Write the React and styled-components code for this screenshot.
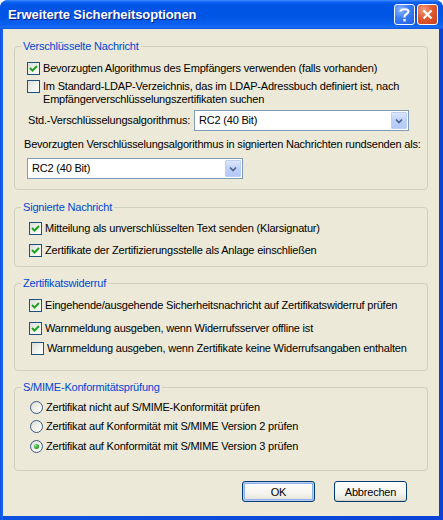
import React from 'react';
import styled, { createGlobalStyle } from 'styled-components';

const GlobalStyle = createGlobalStyle`
  html, body {
    margin: 0;
    padding: 0;
    background: #ffffff;
  }
  body {
    font-family: "Liberation Sans", Arial, sans-serif;
    font-size: 11px;
    letter-spacing: -0.2px;
    color: #000;
  }
`;

const Window = styled.div`
  width: 443px;
  height: 520px;
  display: flex;
  flex-direction: column;
  background: linear-gradient(90deg, #0a4fe0 0, #1c68f5 2px, #0c50e0 3px, #0842d8 100%);
  border-radius: 8px 8px 0 0;
  overflow: hidden;
`;

const TitleBar = styled.div`
  height: 29px;
  flex: none;
  display: flex;
  align-items: center;
  padding: 0 5px 0 8px;
  background: linear-gradient(180deg, #3d8cff 0%, #0a5ff0 8%, #0055e6 20%, #0054e3 55%, #0a60ee 85%, #1a6cf4 93%, #0a55e0 100%);
`;

const Title = styled.div`
  flex: 1;
  color: #fff;
  font-family: "Liberation Sans", Arial, sans-serif;
  font-weight: bold;
  font-size: 13px;
  letter-spacing: -0.1px;
  text-shadow: 1px 1px 0 #0a1e8a;
`;

const CaptionButton = styled.div`
  width: 21px;
  height: 21px;
  box-sizing: border-box;
  margin-left: 2px;
  border: 1px solid #fff;
  border-radius: 3px;
  display: flex;
  align-items: center;
  justify-content: center;
  background: ${p => p.$close
    ? 'radial-gradient(circle at 30% 25%, #f0a080 0%, #e05a30 45%, #c8401a 100%)'
    : 'radial-gradient(circle at 30% 25%, #8cb6ff 0%, #3a7cf5 45%, #1f5ee0 100%)'};
`;

const Body = styled.div`
  flex: 1;
  margin: 0 4px 4px 3px;
  background: #ece9d8;
  padding: 11px 11px 0 11px;
  display: flex;
  flex-direction: column;
`;

const Group = styled.fieldset`
  margin: ${p => p.$mt || 0}px 0 0 0;
  padding: 0 0 ${p => p.$pb}px ${p => p.$pl}px;
  border: 1px solid #d0d0bf;
  border-radius: 4px;
  min-width: 0;
`;

const Legend = styled.legend`
  color: #0046d5;
  padding: 0 2px;
  margin-left: ${p => p.$ml}px;
  line-height: 13px;
`;

const Row = styled.div`
  display: flex;
  align-items: flex-start;
  margin-top: ${p => p.$mt || 0}px;
  margin-left: ${p => p.$ml || 0}px;
  line-height: 13px;
`;

const FieldRow = styled.div`
  display: flex;
  align-items: center;
  margin-top: ${p => p.$mt || 0}px;
  line-height: 13px;
`;

const Label = styled.div`
  margin-left: ${p => p.$ml || 0}px;
  width: ${p => p.$w ? `${p.$w}px` : 'auto'};
  flex: none;
  white-space: nowrap;
`;

const Text = styled.div`
  margin-left: ${p => p.$gap ?? 3}px;
`;

const Box = styled.div`
  width: 13px;
  height: 13px;
  flex: none;
  box-sizing: border-box;
  border: 1px solid #1c5180;
  background: linear-gradient(135deg, #dcdcd7 0%, #f4f4f0 60%, #ffffff 100%);
  display: flex;
  align-items: center;
  justify-content: center;
`;

const Radio = styled.div`
  width: 13px;
  height: 13px;
  flex: none;
  box-sizing: border-box;
  border: 1px solid #3b5a82;
  border-radius: 50%;
  background: linear-gradient(135deg, #dcdcd7 0%, #f4f4f0 60%, #ffffff 100%);
  display: flex;
  align-items: center;
  justify-content: center;
`;

const Dot = styled.div`
  width: 5px;
  height: 5px;
  border-radius: 50%;
  background: radial-gradient(circle at 35% 35%, #8ee68e 0%, #21a121 60%, #1a7d1a 100%);
`;

const Combo = styled.div`
  width: ${p => p.$w}px;
  height: 21px;
  box-sizing: border-box;
  margin-left: ${p => p.$ml || 0}px;
  border: 1px solid #7f9db9;
  background: #fff;
  display: flex;
  align-items: center;
  padding: 1px 1px 1px 4px;
`;

const ComboValue = styled.div`
  flex: 1;
`;

const DropButton = styled.div`
  width: 16px;
  height: 17px;
  box-sizing: border-box;
  border: 1px solid #bdcff5;
  border-radius: 1px;
  background: linear-gradient(180deg, #dbe6fd 0%, #c1d3fb 45%, #b4c8f6 100%);
  display: flex;
  align-items: center;
  justify-content: center;
`;

const Buttons = styled.div`
  display: flex;
  justify-content: flex-end;
  gap: 19px;
  margin: 10px 21px 0 0;
`;

const Button = styled.div`
  width: 73px;
  height: 21px;
  box-sizing: border-box;
  border: 1px solid #003c74;
  border-radius: 3px;
  background: linear-gradient(180deg, #ffffff 0%, #f5f4ef 60%, #e3e1d6 100%);
  display: flex;
  align-items: center;
  justify-content: center;
  box-shadow: ${p => p.$default
    ? 'inset 0 0 0 1px #b7cef5, inset 0 0 0 2px #8fb0ea'
    : 'inset 0 -1px 0 #d6d0c5'};
`;

const Check = () => (
  <svg width="9" height="9" viewBox="0 0 9 9">
    <polyline points="1,4 3.5,6.5 8,2" fill="none" stroke="#21a121" strokeWidth="2" />
  </svg>
);

const CheckBox = ({ checked, children, mt, ml, gap }) => (
  <Row $mt={mt} $ml={ml}>
    <Box>{checked && <Check />}</Box>
    <Text $gap={gap}>{children}</Text>
  </Row>
);

const RadioItem = ({ checked, children, mt }) => (
  <Row $mt={mt}>
    <Radio>{checked && <Dot />}</Radio>
    <Text $gap={3}>{children}</Text>
  </Row>
);

const Chevron = () => (
  <svg width="8" height="6" viewBox="0 0 8 6">
    <polyline points="1,1.5 4,4.5 7,1.5" fill="none" stroke="#4d6185" strokeWidth="1.6" />
  </svg>
);

const Select = ({ value, width, ml }) => (
  <Combo $w={width} $ml={ml}>
    <ComboValue>{value}</ComboValue>
    <DropButton><Chevron /></DropButton>
  </Combo>
);

const HelpIcon = () => (
  <svg width="13" height="15" viewBox="0 0 13 15">
    <path d="M2.5 4.5 C2.5 1.5 10.5 1.5 10.5 4.5 C10.5 7 6.5 7 6.5 9.5 L6.5 10.5" fill="none" stroke="#fff" strokeWidth="2.2" />
    <rect x="5.3" y="12" width="2.4" height="2.4" fill="#fff" />
  </svg>
);

const CloseIcon = () => (
  <svg width="11" height="11" viewBox="0 0 11 11">
    <path d="M1.5 1.5 L9.5 9.5 M9.5 1.5 L1.5 9.5" stroke="#fff" strokeWidth="2.2" />
  </svg>
);

export default function App() {
  return (
    <>
      <GlobalStyle />
      <Window>
        <TitleBar>
          <Title>Erweiterte Sicherheitsoptionen</Title>
          <CaptionButton><HelpIcon /></CaptionButton>
          <CaptionButton $close><CloseIcon /></CaptionButton>
        </TitleBar>
        <Body>
          <Group $pl={12} $pb={10}>
            <Legend $ml={-6}>Verschlüsselte Nachricht</Legend>
            <CheckBox checked mt={9}>Bevorzugten Algorithmus des Empfängers verwenden (falls vorhanden)</CheckBox>
            <CheckBox mt={5}>
              Im Standard-LDAP-Verzeichnis, das im LDAP-Adressbuch definiert ist, nach<br />
              Empfängerverschlüsselungszertifikaten suchen
            </CheckBox>
            <FieldRow $mt={4}>
              <Label $ml={1} $w={166}>Std.-Verschlüsselungsalgorithmus:</Label>
              <Select value="RC2 (40 Bit)" width={215} />
            </FieldRow>
            <FieldRow $mt={7}>
              <Label $ml={-3}>Bevorzugten Verschlüsselungsalgorithmus in signierten Nachrichten rundsenden als:</Label>
            </FieldRow>
            <FieldRow $mt={7}>
              <Select value="RC2 (40 Bit)" width={216} />
            </FieldRow>
          </Group>

          <Group $mt={11} $pl={14} $pb={9}>
            <Legend $ml={-8}>Signierte Nachricht</Legend>
            <CheckBox checked mt={8}>Mitteilung als unverschlüsselten Text senden (Klarsignatur)</CheckBox>
            <CheckBox checked mt={9}>Zertifikate der Zertifizierungsstelle als Anlage einschließen</CheckBox>
          </Group>

          <Group $mt={10} $pl={14} $pb={15}>
            <Legend $ml={-8}>Zertifikatswiderruf</Legend>
            <CheckBox checked mt={9}>Eingehende/ausgehende Sicherheitsnachricht auf Zertifikatswiderruf prüfen</CheckBox>
            <CheckBox checked mt={10}>Warnmeldung ausgeben, wenn Widerrufsserver offline ist</CheckBox>
            <CheckBox mt={7} ml={2}>Warnmeldung ausgeben, wenn Zertifikate keine Widerrufsangaben enthalten</CheckBox>
          </Group>

          <Group $mt={10} $pl={15} $pb={17}>
            <Legend $ml={-9}>S/MIME-Konformitätsprüfung</Legend>
            <RadioItem mt={7}>Zertifikat nicht auf S/MIME-Konformität prüfen</RadioItem>
            <RadioItem mt={6}>Zertifikat auf Konformität mit S/MIME Version 2 prüfen</RadioItem>
            <RadioItem checked mt={7}>Zertifikat auf Konformität mit S/MIME Version 3 prüfen</RadioItem>
          </Group>

          <Buttons>
            <Button $default>OK</Button>
            <Button>Abbrechen</Button>
          </Buttons>
        </Body>
      </Window>
    </>
  );
}
